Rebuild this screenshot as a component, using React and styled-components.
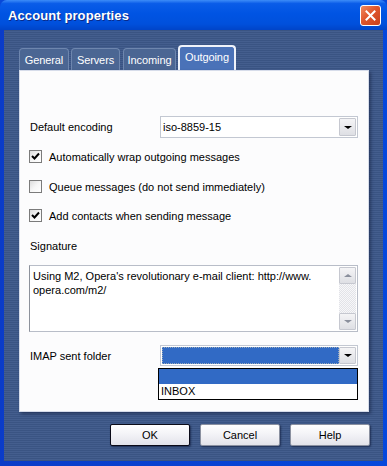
import React from 'react'
import styled, { createGlobalStyle } from 'styled-components'

const GlobalStyle = createGlobalStyle`
  html, body {
    margin: 0;
    padding: 0;
    background: #000;
  }
  body {
    font-family: "Liberation Sans", Arial, sans-serif;
    font-size: 11px;
  }
`

const Window = styled.div`
  width: 387px;
  height: 466px;
  display: flex;
  flex-direction: column;
  background: #0848d8;
  box-sizing: border-box;
  overflow: hidden;
`

const TitleBar = styled.div`
  height: 30px;
  flex: none;
  display: flex;
  align-items: center;
  justify-content: space-between;
  padding: 0 6px 0 8px;
  background: linear-gradient(180deg, #3d8cf8 0%, #0a5ce8 12%, #0054e3 45%, #0050dc 80%, #0044c8 100%);
  border-radius: 7px 7px 0 0;
`

const Title = styled.span`
  color: #fff;
  font-weight: bold;
  font-size: 13px;
  text-shadow: 1px 1px 0 #0a2a8a;
  letter-spacing: 0.1px;
`

const CloseButton = styled.div`
  width: 19px;
  height: 19px;
  border: 1px solid #fff;
  border-radius: 3px;
  background: linear-gradient(135deg, #f08a60 0%, #e0562c 45%, #c8401c 100%);
  display: flex;
  align-items: center;
  justify-content: center;
`

const Frame = styled.div`
  flex: 1;
  display: flex;
  padding: 0 5px 5px 4px;
  background: linear-gradient(90deg, #0a3cc8, #0548dc);
`

const Body = styled.div`
  flex: 1;
  display: flex;
  flex-direction: column;
  padding: 15px 14px 0 15px;
  background: repeating-linear-gradient(180deg, #3a5483 0px, #3a5483 1px, #445e8e 1px, #445e8e 2px);
`

const TabStrip = styled.div`
  display: flex;
  align-items: flex-end;
  height: 25px;
`

const Tab = styled.div`
  width: ${p => p.$w}px;
  margin-right: ${p => p.$gap || 2}px;
  height: ${p => (p.$active ? '25px' : '22px')};
  box-sizing: border-box;
  display: flex;
  align-items: center;
  justify-content: center;
  color: #fff;
  font-size: 11px;
  letter-spacing: -0.1px;
  border-radius: 4px 4px 0 0;
  background: ${p => (p.$active ? '#4a72b8' : '#4b6693')};
  border: ${p => (p.$active ? '2px solid #eef2fa' : '1px solid #6e86ae')};
  border-bottom: none;
  padding-bottom: ${p => (p.$active ? '4px' : '0')};
`

const Panel = styled.div`
  position: relative;
  height: 342px;
  background: #fcfcfd;
  border: 1px solid #d6dcea;
  box-sizing: border-box;
  box-shadow: 2px 2px 3px rgba(20, 30, 60, 0.5);
  padding: 45px 10px 0 9px;
  display: flex;
  flex-direction: column;
`

const FieldRow = styled.div`
  display: flex;
  align-items: center;
  margin-top: ${p => p.$top || 0}px;
`

const Label = styled.div`
  width: 130px;
  padding-left: 1px;
  color: #000;
`

const Select = styled.div`
  width: 198px;
  height: ${p => p.$h || 22}px;
  box-sizing: border-box;
  border: 1px solid #c3c8d2;
  background: #fff;
  display: flex;
  align-items: center;
  padding: 1px;
  position: relative;
`

const SelectValue = styled.div`
  flex: 1;
  height: 100%;
  display: flex;
  align-items: center;
  padding-left: 1px;
  box-sizing: border-box;
  background: ${p => (p.$selected ? '#316ac5' : 'transparent')};
  outline: ${p => (p.$selected ? '1px dotted #9ab' : 'none')};
  outline-offset: -1px;
  color: #000;
`

const ArrowButton = styled.div`
  width: 17px;
  height: ${p => p.$h || 18}px;
  box-sizing: border-box;
  flex: none;
  background: linear-gradient(180deg, #f4f4f6, #dedfe4);
  border: 1px solid #c6c8d0;
  border-radius: 1px;
  display: flex;
  align-items: center;
  justify-content: center;
`

const Triangle = styled.div`
  width: 0;
  height: 0;
  border-left: ${p => p.$size || 4}px solid transparent;
  border-right: ${p => p.$size || 4}px solid transparent;
  ${p => (p.$up ? `border-bottom: ${(p.$size || 4) - 1}px solid ${p.$color || '#000'};` : `border-top: ${(p.$size || 4) - 1}px solid ${p.$color || '#000'};`)}
`

const CheckRow = styled.div`
  display: flex;
  align-items: center;
  gap: 7px;
  height: 13px;
  margin-top: ${p => p.$top}px;
`

const Box = styled.div`
  width: 13px;
  height: 13px;
  box-sizing: border-box;
  border: 1px solid #7b7b7b;
  background: linear-gradient(135deg, #dcdcdc 0%, #f6f6f6 50%, #fff 100%);
  display: flex;
  align-items: center;
  justify-content: center;
  flex: none;
`

const PlainText = styled.div`
  color: #000;
  margin-top: ${p => p.$top || 0}px;
  padding-left: 1px;
  line-height: 13px;
`

const TextArea = styled.div`
  margin-top: 12px;
  width: 329px;
  height: 67px;
  box-sizing: border-box;
  border: 1px solid #b8bdc8;
  border-left-color: #8d929c;
  background: #fff;
  display: flex;
  padding: 1px;
`

const AreaText = styled.div`
  flex: 1;
  padding: 2px 0 0 2px;
  line-height: 14px;
  color: #000;
`

const ScrollTrack = styled.div`
  width: 17px;
  display: flex;
  flex-direction: column;
  justify-content: space-between;
  background-color: #f4f4f6;
  background-image: repeating-conic-gradient(#e2e3e8 0% 25%, #f7f7f9 0% 50%);
  background-size: 2px 2px;
`

const DropList = styled.div`
  position: absolute;
  left: 138px;
  top: 297px;
  width: 200px;
  border: 1px solid #000;
  background: #fff;
  box-sizing: border-box;
`

const DropItem = styled.div`
  height: 15px;
  line-height: 15px;
  padding-left: 2px;
  background: ${p => (p.$hl ? '#316ac5' : '#fff')};
  color: ${p => (p.$hl ? '#fff' : '#000')};
`

const ButtonRow = styled.div`
  display: flex;
  justify-content: flex-end;
  gap: 10px;
  margin-top: 12px;
  margin-right: -1px;
`

const Button = styled.div`
  width: 80px;
  height: 22px;
  box-sizing: border-box;
  display: flex;
  align-items: center;
  justify-content: center;
  color: #000;
  font-size: 11px;
  border-radius: 2px;
  background: linear-gradient(180deg, #ffffff 0%, #f2f2f6 50%, #e2e3ea 100%);
  border: 1px solid ${p => (p.$default ? '#0b0b18' : '#8a90a0')};
  box-shadow: 1px 1px 2px rgba(10, 20, 50, 0.6);
`

function Check() {
  return (
    <svg width="9" height="9" viewBox="0 0 9 9">
      <path d="M1 4 L3.5 6.5 L8 1.5" fill="none" stroke="#000" strokeWidth="2" />
    </svg>
  )
}

function Checkbox({ checked, label, top }) {
  return (
    <CheckRow $top={top}>
      <Box>{checked && <Check />}</Box>
      <span>{label}</span>
    </CheckRow>
  )
}

export default function App() {
  return (
    <>
      <GlobalStyle />
      <Window>
        <TitleBar>
          <Title>Account properties</Title>
          <CloseButton>
            <svg width="11" height="11" viewBox="0 0 11 11">
              <path d="M1.5 1.5 L9.5 9.5 M9.5 1.5 L1.5 9.5" stroke="#fff" strokeWidth="2" strokeLinecap="square" />
            </svg>
          </CloseButton>
        </TitleBar>
        <Frame>
          <Body>
            <TabStrip>
              <Tab $w={50}>General</Tab>
              <Tab $w={49} $gap={3}>Servers</Tab>
              <Tab $w={53}>Incoming</Tab>
              <Tab $w={58} $active>Outgoing</Tab>
            </TabStrip>
            <Panel>
              <FieldRow>
                <Label>Default encoding</Label>
                <Select>
                  <SelectValue>iso-8859-15</SelectValue>
                  <ArrowButton><Triangle /></ArrowButton>
                </Select>
              </FieldRow>
              <Checkbox checked top={12} label="Automatically wrap outgoing messages" />
              <Checkbox top={17} label="Queue messages (do not send immediately)" />
              <Checkbox checked top={16} label="Add contacts when sending message" />
              <PlainText $top={18}>Signature</PlainText>
              <TextArea>
                <AreaText>
                  Using M2, Opera's revolutionary e-mail client: http://www.
                  <br />
                  opera.com/m2/
                </AreaText>
                <ScrollTrack>
                  <ArrowButton $h={17}><Triangle $up $color="#8a8f9c" /></ArrowButton>
                  <ArrowButton $h={17}><Triangle $color="#8a8f9c" /></ArrowButton>
                </ScrollTrack>
              </TextArea>
              <FieldRow $top={13}>
                <Label>IMAP sent folder</Label>
                <Select $h={21}>
                  <SelectValue $selected />
                  <ArrowButton $h={17}><Triangle /></ArrowButton>
                </Select>
              </FieldRow>
              <DropList>
                <DropItem $hl>&nbsp;</DropItem>
                <DropItem>INBOX</DropItem>
              </DropList>
            </Panel>
            <ButtonRow>
              <Button $default>OK</Button>
              <Button>Cancel</Button>
              <Button>Help</Button>
            </ButtonRow>
          </Body>
        </Frame>
      </Window>
    </>
  )
}
